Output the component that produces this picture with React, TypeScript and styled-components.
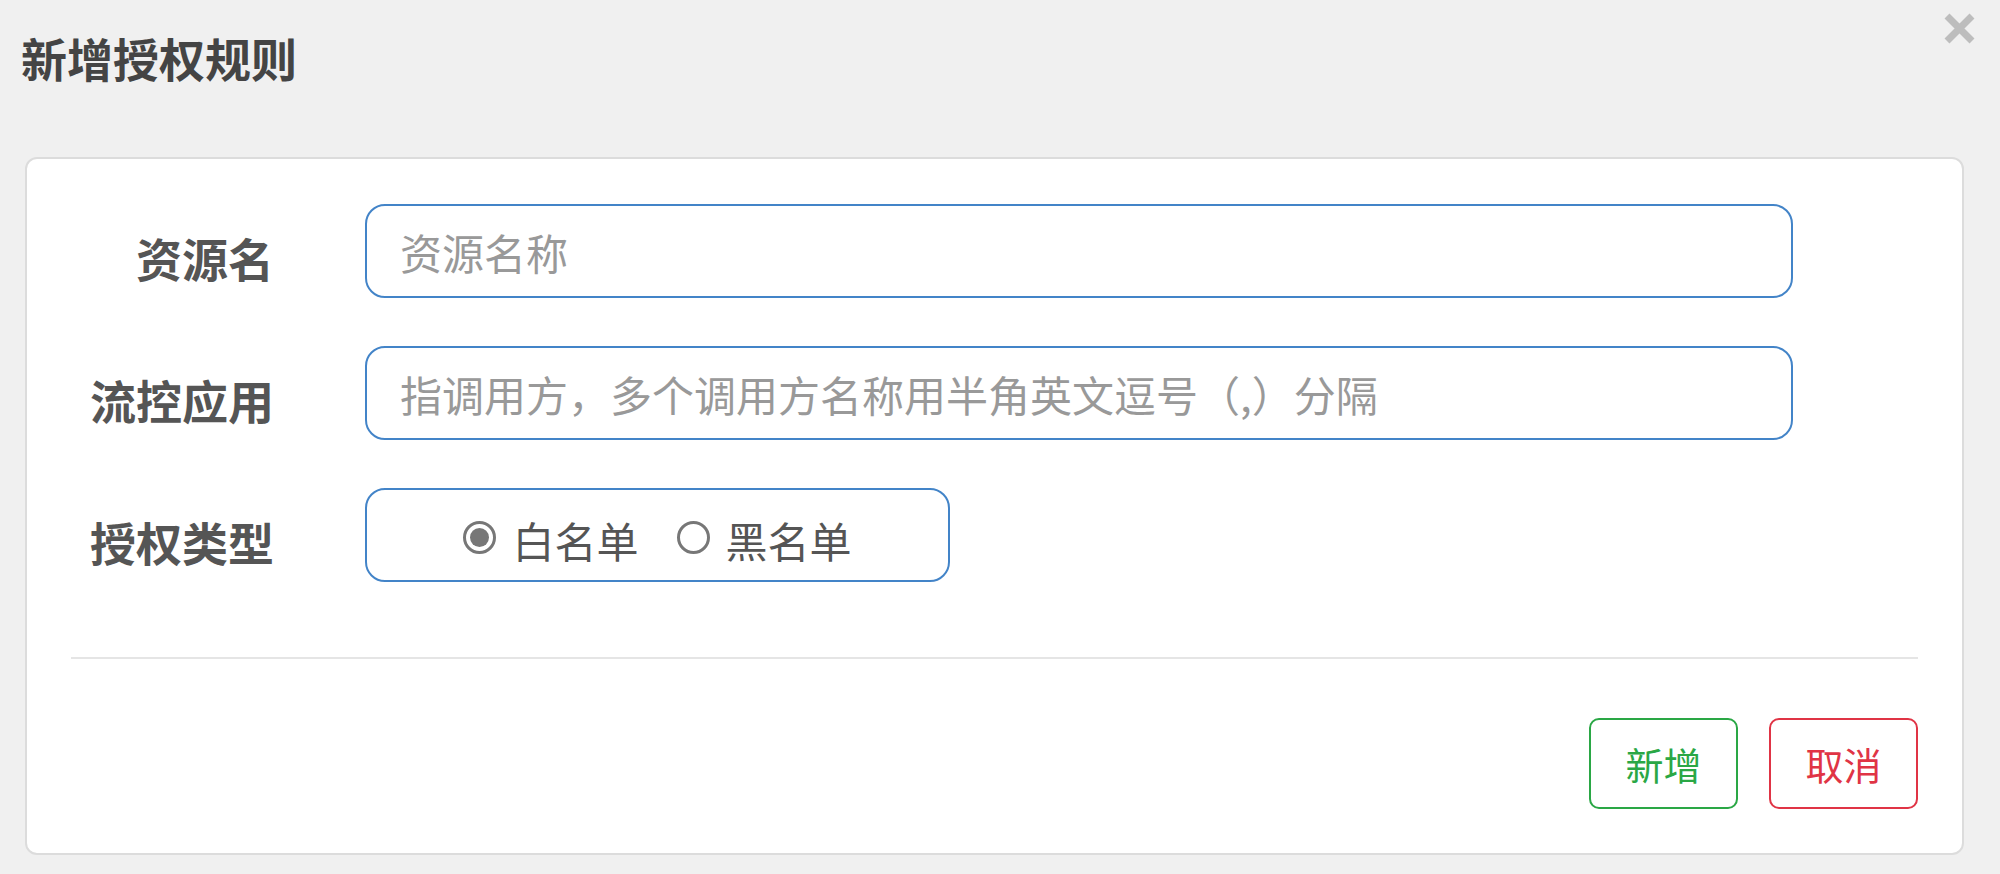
import styled, { createGlobalStyle } from 'styled-components';

const GlobalStyle = createGlobalStyle`
  html, body {
    margin: 0;
    padding: 0;
    background: #f0f0f0;
  }
  body {
    font-family: "Noto Sans CJK SC", "Noto Sans", sans-serif;
  }
`;

const CloseIcon = () => (
  <svg width="33" height="33" viewBox="0 0 33 33">
    <path d="M4 4 L29 29 M29 4 L4 29" stroke="#bdbdbd" strokeWidth="7" strokeLinecap="butt" />
  </svg>
);

const App = () => {
  return (
    <Page>
      <GlobalStyle />
      <Header>
        <Title>新增授权规则</Title>
        <CloseButton type="button">
          <CloseIcon />
        </CloseButton>
      </Header>
      <Card>
        <Form>
          <Label>资源名</Label>
          <Input placeholder="资源名称" />
          <Label>流控应用</Label>
          <Input placeholder="指调用方，多个调用方名称用半角英文逗号（,）分隔" autoFocus />
          <Label>授权类型</Label>
          <RadioBox>
            <RadioOption>
              <RadioDot checked />
              <span>白名单</span>
            </RadioOption>
            <RadioOption>
              <RadioDot />
              <span>黑名单</span>
            </RadioOption>
          </RadioBox>
        </Form>
        <Divider />
        <Footer>
          <ActionButton $color="#2aa745">新增</ActionButton>
          <ActionButton $color="#e03445">取消</ActionButton>
        </Footer>
      </Card>
    </Page>
  );
};

const Page = styled.div`
  padding: 0 24px 19px 21px;
  min-height: 874px;
  box-sizing: border-box;
`;

const Header = styled.div`
  display: flex;
  justify-content: space-between;
  align-items: flex-start;
  padding-top: 12px;
  height: 157px;
  box-sizing: border-box;
`;

const Title = styled.h4`
  margin: 22px 0 0;
  font-size: 46px;
  line-height: 1;
  font-weight: 700;
  color: #444;
`;

const CloseButton = styled.button`
  border: none;
  background: none;
  padding: 0;
  display: flex;
  cursor: pointer;
`;

const Card = styled.div`
  margin: 0 12px 0 4px;
  background: #fff;
  border: 2px solid #dcdcdc;
  border-radius: 12px;
  padding: 45px 44px 44px;
`;

const Form = styled.div`
  display: grid;
  grid-template-columns: 203px 1428px;
  grid-auto-rows: 94px;
  column-gap: 91px;
  row-gap: 48px;
`;

const Label = styled.label`
  display: flex;
  align-items: center;
  justify-content: flex-end;
  padding-top: 12px;
  font-size: 46px;
  font-weight: 700;
  color: #555;
`;

const Input = styled.input`
  box-sizing: border-box;
  height: 94px;
  width: 100%;
  border: 2px solid #4384c8;
  border-radius: 20px;
  padding: 0 33px;
  font-family: "Noto Sans CJK SC", "Noto Sans", sans-serif;
  font-size: 42px;
  color: #555;
  outline: none;
  caret-color: #333;

  &::placeholder {
    color: #999;
  }
`;

const RadioBox = styled.div`
  box-sizing: border-box;
  width: 585px;
  border: 2px solid #4384c8;
  border-radius: 20px;
  display: flex;
  align-items: center;
  justify-content: center;
  gap: 38px;
  padding-top: 8px;
`;

const RadioOption = styled.label`
  display: flex;
  align-items: center;
  gap: 16px;
  font-size: 42px;
  color: #555;
`;

const RadioDot = styled.span<{ checked?: boolean }>`
  box-sizing: border-box;
  width: 33px;
  height: 33px;
  border-radius: 50%;
  border: 3px solid #777;
  display: flex;
  align-items: center;
  justify-content: center;
  margin-top: -4px;

  &::after {
    content: '';
    width: 19px;
    height: 19px;
    border-radius: 50%;
    background: #777;
    display: ${(p) => (p.checked ? 'block' : 'none')};
  }
`;

const Divider = styled.hr`
  margin: 75px 0 0;
  border: none;
  border-top: 2px solid #e5e5e5;
`;

const Footer = styled.div`
  display: flex;
  justify-content: flex-end;
  gap: 31px;
  margin-top: 59px;
`;

const ActionButton = styled.button<{ $color: string }>`
  width: 149px;
  height: 91px;
  background: #fff;
  border: 2px solid ${(p) => p.$color};
  border-radius: 10px;
  color: ${(p) => p.$color};
  font-family: "Noto Sans CJK SC", "Noto Sans", sans-serif;
  font-size: 38px;
  cursor: pointer;
`;

export default App;
